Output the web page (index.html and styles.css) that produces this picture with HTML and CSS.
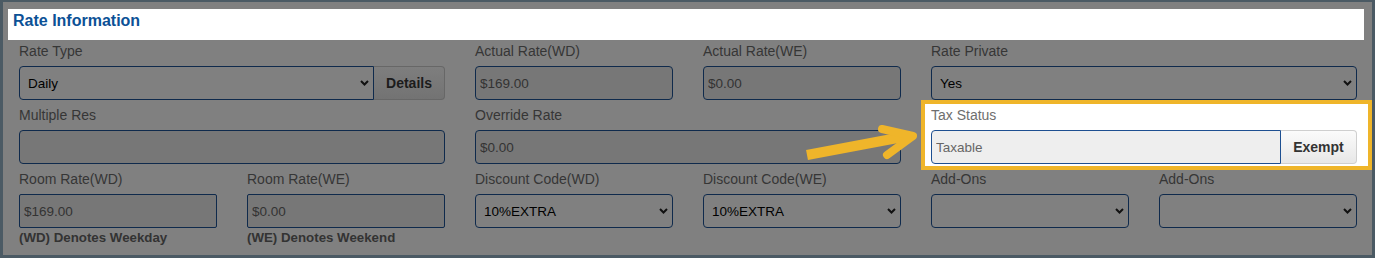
FILE: index.html
```html
<!DOCTYPE html>
<html lang="en">
<head>
  <meta charset="UTF-8" />
  <title>Rate Information</title>
  <link rel="stylesheet" href="styles.css">
</head>
<body>
  <div class="modal">
    <div class="modal-head">
      <h3>Rate Information</h3>
    </div>

    <div class="rate-grid">
      <div class="field span2">
        <label for="rateType">Rate Type</label>
        <div class="group">
          <div class="select-wrap">
            <select id="rateType" class="ctl joined"><option>Daily</option></select>
            <svg class="chev" width="9" height="6" viewBox="0 0 9 6"><path d="M1 1l3.5 3.5L8 1" /></svg>
          </div>
          <button class="btn btn-dim">Details</button>
        </div>
      </div>
      <div class="field">
        <label for="actWd">Actual Rate(WD)</label>
        <input id="actWd" class="ctl ro" value="$169.00" disabled />
      </div>
      <div class="field">
        <label for="actWe">Actual Rate(WE)</label>
        <input id="actWe" class="ctl ro" value="$0.00" disabled />
      </div>
      <div class="field span2">
        <label for="ratePrivate">Rate Private</label>
        <div class="select-wrap">
          <select id="ratePrivate" class="ctl"><option>Yes</option></select>
          <svg class="chev" width="9" height="6" viewBox="0 0 9 6"><path d="M1 1l3.5 3.5L8 1" /></svg>
        </div>
      </div>

      <div class="field span2">
        <label for="multiRes">Multiple Res</label>
        <input id="multiRes" class="ctl ro" value="" disabled />
      </div>
      <div class="field span2">
        <label for="override">Override Rate</label>
        <input id="override" class="ctl ro" value="$0.00" disabled />
      </div>
      <div class="field span2 highlight">
        <label for="taxStatus">Tax Status</label>
        <div class="group">
          <input id="taxStatus" class="ctl tax" value="Taxable" readonly />
          <button class="btn btn-lite">Exempt</button>
        </div>
      </div>

      <div class="field">
        <label for="roomWd">Room Rate(WD)</label>
        <input id="roomWd" class="ctl ro sq" value="$169.00" disabled />
      </div>
      <div class="field">
        <label for="roomWe">Room Rate(WE)</label>
        <input id="roomWe" class="ctl ro sq" value="$0.00" disabled />
      </div>
      <div class="field">
        <label for="discWd">Discount Code(WD)</label>
        <div class="select-wrap">
          <select id="discWd" class="ctl"><option>10%EXTRA</option></select>
          <svg class="chev" width="9" height="6" viewBox="0 0 9 6"><path d="M1 1l3.5 3.5L8 1" /></svg>
        </div>
      </div>
      <div class="field">
        <label for="discWe">Discount Code(WE)</label>
        <div class="select-wrap">
          <select id="discWe" class="ctl"><option>10%EXTRA</option></select>
          <svg class="chev" width="9" height="6" viewBox="0 0 9 6"><path d="M1 1l3.5 3.5L8 1" /></svg>
        </div>
      </div>
      <div class="field">
        <label for="addOn1">Add-Ons</label>
        <div class="select-wrap">
          <select id="addOn1" class="ctl"><option></option></select>
          <svg class="chev" width="9" height="6" viewBox="0 0 9 6"><path d="M1 1l3.5 3.5L8 1" /></svg>
        </div>
      </div>
      <div class="field">
        <label for="addOn2">Add-Ons</label>
        <div class="select-wrap">
          <select id="addOn2" class="ctl"><option></option></select>
          <svg class="chev" width="9" height="6" viewBox="0 0 9 6"><path d="M1 1l3.5 3.5L8 1" /></svg>
        </div>
      </div>

      <div class="note">(WD) Denotes Weekday</div>
      <div class="note">(WE) Denotes Weekend</div>
    </div>

    <svg class="arrow" width="130" height="50" viewBox="800 120 130 50">
      <path class="shaft" d="M807 155L908 136" />
      <path class="head" d="M882 129L913 136L887 155" />
    </svg>
  </div>
</body>
</html>
```

FILE: styles.css
```css
body {
  margin: 0;
  font-family: "Liberation Sans", Arial, sans-serif;
}
.modal {
  position: relative;
  width: 1375px;
  height: 258px;
  box-sizing: border-box;
  border-style: solid;
  border-color: #4b5a64;
  border-width: 2px 3px 3px 3px;
  background: #808080;
  padding: 7px 8px 0 5px;
}
.modal-head {
  background: #fff;
  height: 31px;
  box-sizing: border-box;
  padding: 2px 5px;
}
.modal-head h3 {
  margin: 0;
  font-size: 16px;
  line-height: 19px;
  font-weight: bold;
  color: #0c5196;
}
.rate-grid {
  display: grid;
  grid-template-columns: repeat(6, 198px);
  column-gap: 30px;
  row-gap: 5px;
  margin: 1px 0 0 11px;
}
.span2 {
  grid-column: span 2;
}
.field label {
  display: block;
  font-size: 14px;
  line-height: 20px;
  margin-bottom: 5px;
  color: #363636;
}
.group {
  display: flex;
}
.select-wrap {
  position: relative;
  flex: 1;
}
.ctl {
  display: block;
  width: 100%;
  height: 34px;
  box-sizing: border-box;
  margin: 0;
  border: 1px solid #0f2a4c;
  border-radius: 4px;
  background: #808080;
  font-family: "Liberation Sans", Arial, sans-serif;
  font-size: 13.5px;
  color: #000;
  padding: 0 22px 0 8px;
  appearance: none;
  -webkit-appearance: none;
  outline: none;
}
.ctl.ro {
  background: #777;
  color: #333;
  padding: 0 4px;
  -webkit-text-fill-color: #333;
  opacity: 1;
}
.ctl.sq {
  border-radius: 2px;
}
.ctl.joined {
  border-radius: 4px 0 0 4px;
}
.chev {
  position: absolute;
  right: 5px;
  top: 14px;
}
.chev path {
  fill: none;
  stroke: #111;
  stroke-width: 2;
}
.btn {
  height: 34px;
  box-sizing: border-box;
  margin: 0;
  padding: 0;
  font-family: "Liberation Sans", Arial, sans-serif;
  font-size: 14px;
  font-weight: bold;
  border-radius: 0 4px 4px 0;
}
.btn-dim {
  width: 71px;
  border: 1px solid #676767;
  border-left: none;
  background: linear-gradient(#7e7e7e, #737373);
  color: #1c1c1c;
}
.btn-lite {
  width: 76px;
  border: 1px solid #cfcfcf;
  border-left: none;
  background: linear-gradient(#fbfbfb, #e7e7e7);
  color: #333;
}
.highlight {
  margin: -5px -15px -6px -10px;
  padding: 1px 11px 2px 6px;
  border: 4px solid #efb52a;
  background: #fff;
}
.highlight label {
  color: #6e6e6e;
}
.ctl.tax {
  flex: 1;
  width: auto;
  background: #eee;
  border-color: #1d4f91;
  border-radius: 4px 0 0 4px;
  color: #666;
  padding: 0 4px;
}
.note {
  margin-top: -3px;
  font-size: 13.3px;
  line-height: 16px;
  font-weight: bold;
  color: #333;
}
.arrow {
  position: absolute;
  left: 797px;
  top: 118px;
}
.arrow path {
  fill: none;
  stroke: #efb52a;
}
.arrow .shaft {
  stroke-width: 10;
}
.arrow .head {
  stroke-width: 8;
  stroke-linecap: round;
  stroke-linejoin: round;
}
```
